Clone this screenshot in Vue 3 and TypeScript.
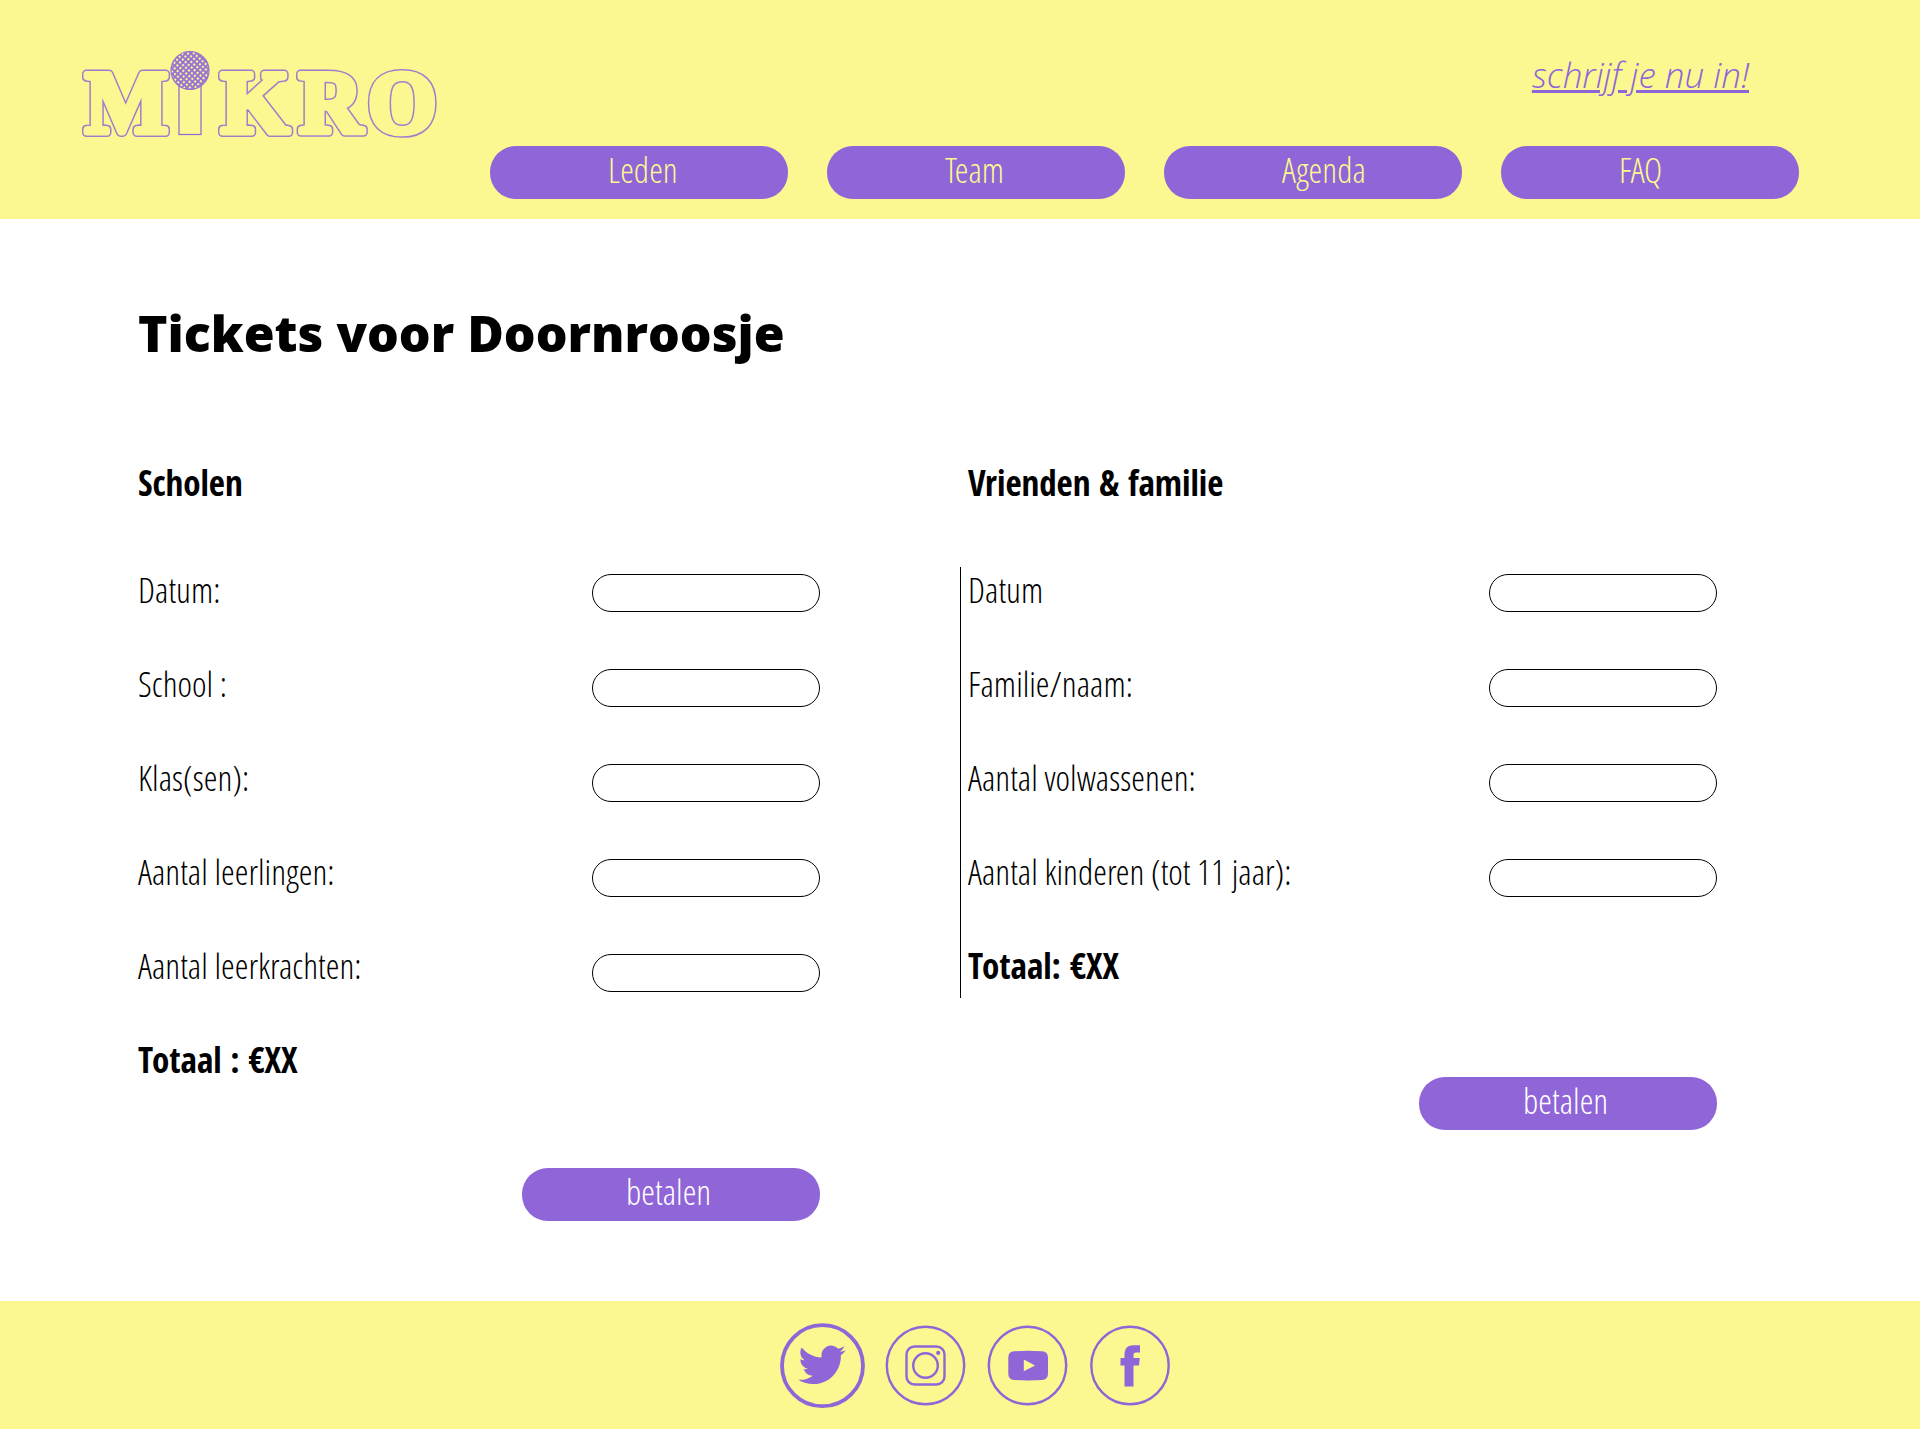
<script setup lang="ts">
interface Field {
  id: string
  label: string
}

interface TicketForm {
  key: string
  title: string
  total: string
  fields: Field[]
}

const navItems: string[] = ['Leden', 'Team', 'Agenda', 'FAQ']

const forms: TicketForm[] = [
  {
    key: 'scholen',
    title: 'Scholen',
    total: 'Totaal : €XX',
    fields: [
      { id: 'school-datum', label: 'Datum:' },
      { id: 'school-naam', label: 'School :' },
      { id: 'school-klassen', label: 'Klas(sen):' },
      { id: 'school-leerlingen', label: 'Aantal leerlingen:' },
      { id: 'school-leerkrachten', label: 'Aantal leerkrachten:' },
    ],
  },
  {
    key: 'familie',
    title: 'Vrienden & familie',
    total: 'Totaal: €XX',
    fields: [
      { id: 'familie-datum', label: 'Datum' },
      { id: 'familie-naam', label: 'Familie/naam:' },
      { id: 'familie-volwassenen', label: 'Aantal volwassenen:' },
      { id: 'familie-kinderen', label: 'Aantal kinderen (tot 11 jaar):' },
    ],
  },
]
</script>

<template>
  <div class="page">
    <header class="header">
      <a class="logo" href="#" aria-label="Mikro">
        <svg viewBox="0 0 360 96" width="360" height="96">
          <defs>
            <pattern id="mesh" width="4" height="4" patternUnits="userSpaceOnUse" patternTransform="rotate(42)">
              <rect width="4" height="4" fill="#9871d2" />
              <rect x="1" y="1" width="2.1" height="2.1" fill="#fbf791" />
            </pattern>
            <g id="letters">
              <text x="5" y="87">M</text>
              <text x="141" y="87">K</text>
              <text x="219" y="87">R</text>
              <text x="288" y="87">O</text>
            </g>
          </defs>
          <!-- fat rounded letters: a wide stroke with a slightly narrower fill-coloured one on top -->
          <use class="letters outer" href="#letters" />
          <use class="letters inner" href="#letters" />
          <rect x="99" y="40" width="22" height="49.5" fill="#fbf791" stroke="#8f65d8" stroke-width="1.2" />
          <circle cx="110" cy="25.5" r="19" fill="url(#mesh)" stroke="#9871d2" stroke-width="1.2" />
        </svg>
      </a>
      <div class="header-side">
        <a class="signup" href="#">schrijf je nu in!</a>
        <nav class="nav">
          <a v-for="item in navItems" :key="item" class="pill nav-link" href="#">{{ item }}</a>
        </nav>
      </div>
    </header>

    <main class="main">
      <h1>Tickets voor Doornroosje</h1>
      <div class="forms">
        <form v-for="form in forms" :key="form.key" class="form" :class="form.key" @submit.prevent>
          <h2>{{ form.title }}</h2>
          <div class="fields">
            <div class="labels">
              <label v-for="field in form.fields" :key="field.id" :for="field.id">{{ field.label }}</label>
              <strong>{{ form.total }}</strong>
            </div>
            <div class="inputs">
              <input v-for="field in form.fields" :id="field.id" :key="field.id" type="text" />
            </div>
          </div>
          <button class="pill pay" type="submit">betalen</button>
        </form>
      </div>
    </main>

    <footer class="footer">
      <a href="#" aria-label="Twitter">
        <svg viewBox="0 0 80 80">
          <circle cx="38.5" cy="39.7" r="40.5" stroke-width="3.8" />
          <path
            class="solid"
            transform="translate(14.4 15.2) scale(1.97)"
            d="M23.953 4.57a10 10 0 01-2.825.775 4.958 4.958 0 002.163-2.723c-.951.555-2.005.959-3.127 1.184a4.92 4.92 0 00-8.384 4.482C7.69 8.095 4.067 6.13 1.64 3.162a4.822 4.822 0 00-.666 2.475c0 1.71.87 3.213 2.188 4.096a4.904 4.904 0 01-2.228-.616v.06a4.923 4.923 0 003.946 4.827 4.996 4.996 0 01-2.212.085 4.936 4.936 0 004.604 3.417 9.867 9.867 0 01-6.102 2.105c-.39 0-.779-.023-1.17-.067a13.995 13.995 0 007.557 2.209c9.053 0 13.998-7.496 13.998-13.985 0-.21 0-.42-.015-.63A9.935 9.935 0 0024 4.59z"
          />
        </svg>
      </a>
      <a href="#" aria-label="Instagram">
        <svg viewBox="0 0 80 80">
          <circle cx="39.5" cy="39.5" r="38.7" />
          <rect x="20.5" y="20.5" width="38" height="38" rx="8" />
          <circle cx="39.5" cy="39.5" r="12.3" />
          <circle class="solid" cx="52.2" cy="26.9" r="2.1" />
        </svg>
      </a>
      <a href="#" aria-label="YouTube">
        <svg viewBox="0 0 80 80">
          <circle cx="39.5" cy="39.5" r="38.7" />
          <path
            class="solid"
            fill-rule="evenodd"
            d="M26 25.3Q40 24.3 54 25.3Q60 25.7 60 31.7V47.7Q60 53.700 54 54Q40 54.900 26 54Q20.300 53.700 20.300 47.700V31.700Q20.300 25.700 26 25.300ZM35.800 33.500V45.200L47 39.400Z"
          />
        </svg>
      </a>
      <a href="#" aria-label="Facebook">
        <svg viewBox="0 0 80 80">
          <circle cx="40" cy="39.5" r="38.7" />
          <path
            class="solid"
            d="M34.5 60.5V39.5H30.5V32H34.5V28.5C34.5 22.5 37.5 19.3 43.5 19.3H50V26.6H46C44.2 26.6 43.5 27.5 43.5 29V32H49.8L49 39.5H43.5V60.5Z"
          />
        </svg>
      </a>
    </footer>
  </div>
</template>

<style>
body {
  margin: 0;
}
</style>

<style scoped>
.page {
  min-height: 100vh;
  display: flex;
  flex-direction: column;
  background: #fff;
  color: #000;
  font-family: 'Open Sans Condensed Light', 'Open Sans Condensed', 'Open Sans', sans-serif;
  font-size: 35px;
  font-weight: 300;
  line-height: 44px;
}

.header {
  display: flex;
  justify-content: space-between;
  padding: 45px 121px 20px 80px;
  background: #fbf791;
}

.logo {
  display: block;
  height: 96px;
}

.logo svg {
  display: block;
  overflow: visible;
}

.letters {
  font-family: 'Liberation Serif', serif;
  font-size: 88px;
  font-weight: 700;
  stroke-linejoin: round;
}

.outer {
  fill: #a27bcd;
  stroke: #a27bcd;
  stroke-width: 9px;
}

.inner {
  fill: #fbf791;
  stroke: #fbf791;
  stroke-width: 6px;
}

.header-side {
  display: flex;
  flex-direction: column;
  align-items: flex-end;
  gap: 49px;
}

.signup {
  margin: 8px 50px 0 0;
  color: #8f65d8;
  font-family: 'Open Sans', sans-serif;
  font-style: italic;
}

.nav {
  display: flex;
  gap: 39px;
}

.pill {
  box-sizing: border-box;
  width: 298px;
  height: 53px;
  border: 0;
  border-radius: 26px;
  background: #8f65d8;
  font: inherit;
  text-align: left;
}

.nav-link {
  padding: 2px 0 0 118px;
  color: #fbf791;
  text-decoration: none;
}

.main {
  flex: 1;
  padding: 80px 0;
}

h1 {
  margin: 0 138px;
  font-family: 'Open Sans', sans-serif;
  font-size: 50px;
  font-weight: 800;
  line-height: 68px;
}

.forms {
  display: grid;
  grid-template-columns: 1fr 1fr;
  margin-top: 94px;
}

.form {
  display: flex;
  flex-direction: column;
}

.scholen {
  padding: 0 140px 0 138px;
}

.familie {
  padding: 0 203px 0 0;
}

h2 {
  margin: 0 0 62px;
  font-family: 'Open Sans Condensed', 'Open Sans', sans-serif;
  font-size: 35px;
  font-weight: 700;
}

.fields {
  display: flex;
  justify-content: space-between;
}

.familie h2 {
  padding-left: 8px;
}

.familie .fields {
  padding: 0 0 10px 7px;
  border-left: 1px solid #000;
}

.labels {
  display: flex;
  flex-direction: column;
  gap: 50px;
  padding-top: 1px;
}

strong {
  font-family: 'Open Sans Condensed', 'Open Sans', sans-serif;
  font-weight: 700;
}

.inputs {
  display: flex;
  flex-direction: column;
  gap: 57px;
  padding-top: 7px;
}

input {
  box-sizing: border-box;
  width: 228px;
  height: 38px;
  padding: 0 16px;
  border: 1px solid #000;
  border-radius: 19px;
  background: #fff;
  font: inherit;
  font-size: 24px;
}

.pay {
  align-self: flex-end;
  margin-top: 86px;
  padding: 0 0 6px 104px;
  color: #fff;
}

.familie .pay {
  margin-top: 79px;
}

.footer {
  display: flex;
  justify-content: center;
  gap: 22px;
  padding: 25px 0 23px 34px;
  background: #fbf791;
}

.footer a {
  width: 80px;
  height: 80px;
}

.footer svg {
  display: block;
  width: 80px;
  height: 80px;
  overflow: visible;
  fill: none;
  stroke: #8f65d8;
  stroke-width: 2.4px;
}

.footer .solid {
  fill: #8f65d8;
  stroke: none;
}
</style>
